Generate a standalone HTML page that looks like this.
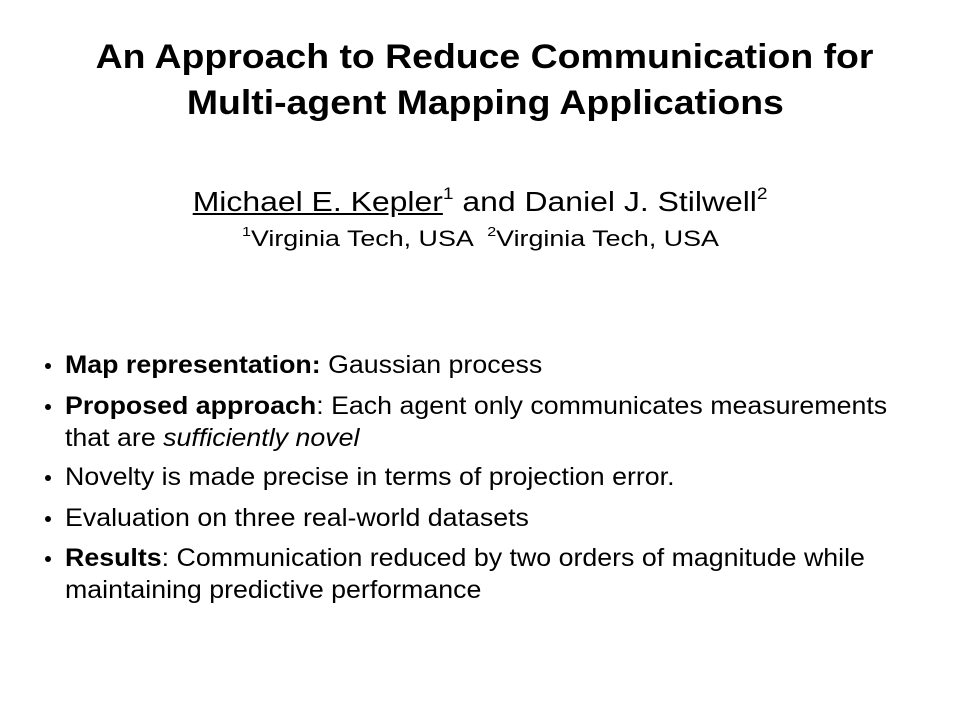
<!DOCTYPE html>
<html><head><style>
body{margin:0;width:960px;height:720px;background:#fff;font-family:"Liberation Sans",Arial,sans-serif;color:#000;position:relative;overflow:hidden}
.c{position:absolute;left:0;width:960px;text-align:center;white-space:nowrap}
.c span.s{display:inline-block}
.t{font-weight:bold;font-size:34px}
.b{position:absolute;left:44px;font-size:25px;white-space:nowrap}
.b span.d{position:absolute;left:1px;top:14px;width:6px;height:6px;border-radius:50%;background:#000}
.b div{margin-left:21px;line-height:32px;transform:scaleX(1.07);transform-origin:left}
sup{font-size:60%;vertical-align:top;position:relative;top:-2px}
</style></head><body>
<div class="c t" style="top:38px;left:5px"><span class="s" style="transform:scaleX(1.1)">An Approach to Reduce Communication for</span></div>
<div class="c t" style="top:84px;left:5px"><span class="s" style="transform:scaleX(1.1)">Multi-agent Mapping Applications</span></div>
<div class="c" style="top:186px;font-size:28px"><span class="s" style="transform:scaleX(1.14)"><u>Michael E. Kepler</u><sup>1</sup> and Daniel J. Stilwell<sup>2</sup></span></div>
<div class="c" style="top:226px;font-size:22px"><span class="s" style="transform:scaleX(1.22)"><sup>1</sup>Virginia Tech, USA &nbsp;<sup>2</sup>Virginia Tech, USA</span></div>
<div class="b" style="top:349px"><span class="d"></span><div><b>Map representation:</b> Gaussian process</div></div>
<div class="b" style="top:390px"><span class="d"></span><div><b>Proposed approach</b>: Each agent only communicates measurements<br>that are <i>sufficiently novel</i></div></div>
<div class="b" style="top:461px"><span class="d"></span><div>Novelty is made precise in terms of projection error.</div></div>
<div class="b" style="top:502px"><span class="d"></span><div>Evaluation on three real-world datasets</div></div>
<div class="b" style="top:542px"><span class="d"></span><div><b>Results</b>: Communication reduced by two orders of magnitude while<br>maintaining predictive performance</div></div>
</body></html>
